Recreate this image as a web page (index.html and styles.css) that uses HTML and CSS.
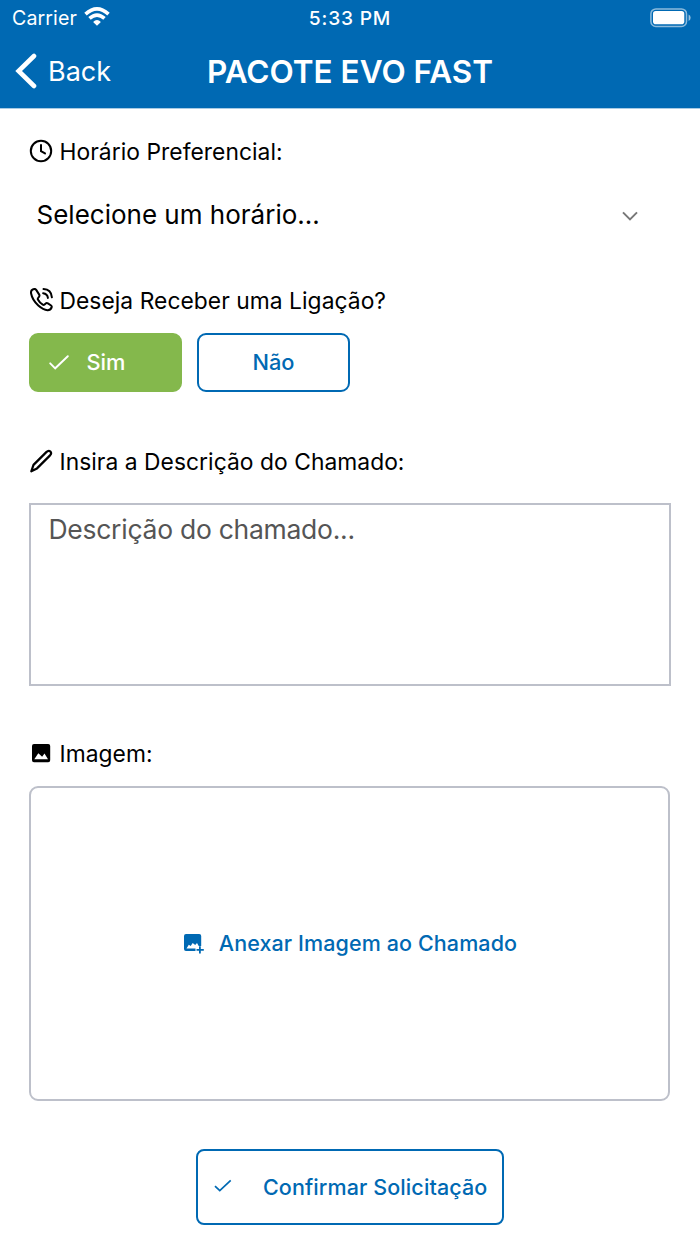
FILE: index.html
```html
<!DOCTYPE html>
<html lang="pt-BR">
<head>
<meta charset="utf-8">
<title>Pacote Evo Fast</title>
<link rel="stylesheet" href="styles.css">
</head>
<body>
<header class="header">
  <div class="status">
    <div class="carrier"><span class="carrier-name">Carrier</span>
      <svg class="wifi" viewBox="0 0 26 19" width="26" height="19"><g fill="none" stroke="#fff" stroke-width="3.6"><path d="M1.5 7.2Q13-3.3 24.5 7.2"/><path d="M5.5 11.4Q13 4.7 20.5 11.4"/></g><path d="M9.1 14.9Q13 11.3 16.9 14.9L13 18.8Z" fill="#fff"/></svg>
    </div>
    <time class="clock">5:33 PM</time>
    <svg class="battery" viewBox="0 0 42 20" width="42" height="20"><rect x=".9" y=".9" width="35.6" height="17.6" rx="5" fill="none" stroke="#fff" stroke-opacity=".55" stroke-width="1.5"/><rect x="3" y="3" width="31.3" height="13.2" rx="2.8" fill="#fff"/><path d="M38.6 6.5q2 .8 2 3.2t-2 3.2z" fill="#fff" opacity=".6"/></svg>
  </div>
  <nav class="nav">
    <a class="back"><svg viewBox="0 0 22 36" width="22" height="36"><path d="M19 3 3.6 18 19 33" fill="none" stroke="#fff" stroke-width="4.6" stroke-linecap="round" stroke-linejoin="miter"/></svg><span class="back-text">Back</span></a>
    <h1 class="title">PACOTE EVO FAST</h1>
  </nav>
</header>
<main class="content">
  <h2 class="label label-time"><svg class="icon" viewBox="0 0 24 24"><g fill="none" stroke="#000" stroke-width="2" stroke-linecap="round"><circle cx="12" cy="12" r="10.2"/><path d="M12 6v6.2l4 2.2"/></g></svg><span>Horário Preferencial:</span></h2>
  <div class="select"><span>Selecione um horário...</span><svg viewBox="0 0 16 10" width="16" height="10"><path d="m1 1.400 7 7 7-7" fill="none" stroke="#777" stroke-width="2"/></svg></div>

  <h2 class="label label-call"><svg class="icon" viewBox="0 0 24 24"><g fill="none" stroke="#000" stroke-width="2" stroke-linecap="round" stroke-linejoin="round"><path d="M4.200 1.300C2.600 1.900 1.700 3.200 2.100 5.500c.8 4.300 3.500 8.600 7.200 12 2.800 2.500 6.100 4.500 9.200 4.700 2.100.1 3.400-1 4.100-2.700.3-.8.2-1.500-.5-2l-3.200-2.100c-.8-.5-1.600-.5-2.200.1l-1.400 1.200c-.5.4-1 .3-1.500 0-2-1.200-3.800-3.100-4.900-5.200-.3-.6-.2-1 .2-1.500l1-1.300c.5-.7.5-1.400.1-2.100L7.200 1.900c-.7-1-1.800-1.200-3-.6Z"/><path d="M14.100 5.200c2.800.3 4.500 2 4.800 4.700M14.500 1.100c5 .3 8 3.300 8.400 8.200"/></g></svg><span>Deseja Receber uma Ligação?</span></h2>
  <div class="choices">
    <button class="choice choice-yes"><svg viewBox="0 0 20 16" width="20" height="16"><path d="m1.200 8.300 5 5L18.800 1.200" fill="none" stroke="#fff" stroke-width="1.900" stroke-linecap="round"/></svg><span>Sim</span></button>
    <button class="choice choice-no"><span>Não</span></button>
  </div>

  <h2 class="label label-desc"><svg class="icon" viewBox="0 0 24 24"><path d="M4.500 15.900 17.300 3.100c1.300-1.300 3-1.600 4.100-.6 1 1.100.7 2.800-.6 4.100L8 19.400 2.300 22.300Z" fill="none" stroke="#000" stroke-width="2.200" stroke-linejoin="round"/></svg><span>Insira a Descrição do Chamado:</span></h2>
  <div class="description">Descrição do chamado...</div>

  <h2 class="label label-image"><svg class="icon" viewBox="0 0 24 24"><path fill-rule="evenodd" d="M5 3h14.200a2 2 0 0 1 2 2v14.200a2 2 0 0 1-2 2H5a2 2 0 0 1-2-2V5a2 2 0 0 1 2-2Zm.3 15.200H19l-3.500-5.700-2.400 3.200-1.300-1.200-2.500-2.200Z"/></svg><span>Imagem:</span></h2>
  <button class="upload"><svg viewBox="0 0 20 20" width="20" height="20"><path fill-rule="evenodd" fill="#0069b3" d="M2 0h13.200a2 2 0 0 1 2 2v9.900h-2.500l-1.700-2.800-1.800 2-2.500-2-2 3-1.900-1.300-2.300 3.800h9V17H2a2 2 0 0 1-2-2V2a2 2 0 0 1 2-2Z"/><path d="M12.500 15.900h7.300M15.900 12.300v7.300" stroke="#0069b3" stroke-width="1.800"/></svg><span>Anexar Imagem ao Chamado</span></button>
  <button class="confirm"><svg viewBox="0 0 18 14" width="18" height="14"><path d="m1 7.100 4.800 4.600L16.700 1.400" fill="none" stroke="#0069b3" stroke-width="1.700"/></svg><span>Confirmar Solicitação</span></button>
</main>
</body>
</html>
```
FILE: styles.css
```css
* { box-sizing: border-box; }
body { margin: 0; width: 700px; height: 1244px; overflow: hidden; background: #fff; color: #000; font-family: Inter, sans-serif; }
svg { display: block; flex: none; }
span { white-space: nowrap; }
button { font-family: inherit; margin: 0; padding: 0; background: none; color: #0069b3; }
.header { height: 108px; background: #0069b3; color: #fff; box-shadow: 0 1px 0 #a8cbe4; }
.status { display: grid; grid-template-columns: 200px 300px 200px; height: 36px; align-items: center; }
.carrier { display: flex; align-items: center; gap: 7px; padding-left: 12px; }
.carrier-name { font-size: 19.6px; letter-spacing: .1px; }
.wifi { margin-top: -3px; }
.clock { text-align: center; font-size: 19.2px; font-weight: 500; letter-spacing: .8px; }
.battery { justify-self: end; margin-right: 8px; margin-top: -1px; }
.nav { display: grid; grid-template-columns: 200px 300px 200px; height: 70px; align-items: center; }
.back { display: flex; align-items: center; gap: 11px; padding-left: 15px; }
.back-text { font-size: 27px; }
.title { margin: 0; padding-top: 1px; text-align: center; white-space: nowrap; font-size: 31.5px; font-weight: 600; line-height: 40px; }
.content { display: flex; flex-direction: column; padding: 27px 29px 0; }
.label { display: flex; align-items: center; gap: 6.5px; margin: 0; height: 32px; font-size: 22.8px; font-weight: 400; letter-spacing: .05px; }
.icon { width: 24px; height: 24px; }
.select { display: flex; align-items: center; justify-content: space-between; height: 60px; margin-top: 17px; padding: 0 33px 0 7.5px; font-size: 26px; }
.select svg { margin-top: 3px; }
.label-call { margin-top: 40px; }
.choices { display: flex; gap: 15px; margin-top: 17px; }
.choice { display: flex; align-items: center; width: 153px; height: 59px; border: 2px solid #0069b3; border-radius: 9px; font-size: 21.8px; font-weight: 500; letter-spacing: 0; }
.choice span, .upload span { margin-top: -1px; }
.choice-yes { gap: 18px; padding-left: 17.5px; background: #84b84c; border-color: #84b84c; color: #fff; }
.choice-no { justify-content: center; }
.label-desc { margin-top: 53px; }
.description { height: 183px; width: 642px; margin-top: 26px; padding: 7px 17.5px; border: 2px solid #bdc0ca; color: #555; font-size: 26.5px; line-height: 34px; letter-spacing: -.27px; }
.label-image { margin-top: 51px; }
.upload { display: flex; align-items: center; justify-content: center; gap: 15px; width: 641px; height: 315px; margin-top: 17px; padding-left: 2px; border: 2px solid #bdc0ca; border-radius: 9px; font-size: 21.5px; font-weight: 500; letter-spacing: .1px; }
.upload span { margin-top: -2px; }
.confirm { display: flex; align-items: center; gap: 31px; align-self: center; width: 308px; height: 76px; margin-top: 48px; padding-left: 16px; border: 2px solid #0069b3; border-radius: 8px; font-size: 21.5px; font-weight: 500; letter-spacing: .1px; }
.confirm svg { margin-top: -2px; }
```
